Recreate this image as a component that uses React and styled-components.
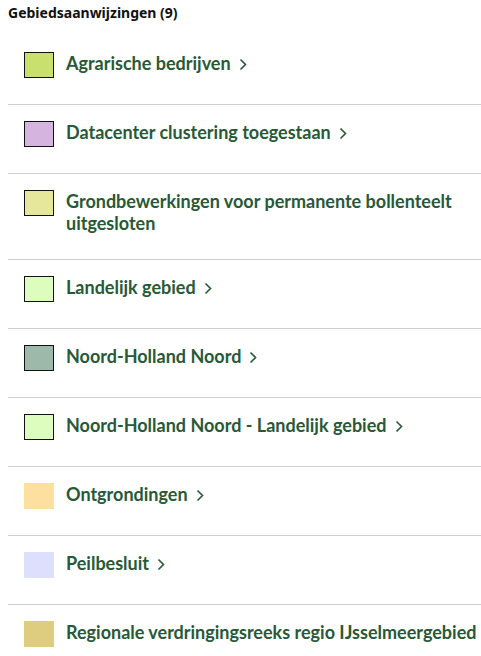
import React from "react";
import styled, { createGlobalStyle } from "styled-components";

const Global = createGlobalStyle`
  html, body { margin: 0; padding: 0; background: #fff; }
  body { font-family: Lato, "Noto Sans", sans-serif; }
`;

const Panel = styled.section`
  padding: 5px 0 0 8px;
  width: 473px;
`;

const Title = styled.h2`
  margin: 0;
  font-size: 14px;
  line-height: 16px;
  font-weight: 700;
  color: #111;
  font-family: "Noto Sans", sans-serif;
`;

const List = styled.ul`
  list-style: none;
  margin: 15px 0 0;
  padding: 0;
`;

const Row = styled.li`
  display: flex;
  align-items: flex-start;
  gap: 12px;
  padding: 16px 0 26px 16px;
  border-bottom: ${(p) => (p.$last ? "none" : "1px solid #cfcfcf")};
`;

const Swatch = styled.span`
  flex: none;
  width: 30px;
  height: 26px;
  box-sizing: border-box;
  background: ${(p) => p.$color};
  border: ${(p) => (p.$outlined ? "1px solid #111" : "none")};
`;

const Label = styled.a`
  font-size: 18px;
  line-height: 21.5px;
  font-weight: 700;
  color: #275937;
  text-decoration: none;
  padding-top: 1px;
  margin-bottom: -1px;
`;

const Chevron = styled.svg`
  display: inline-block;
  width: 8px;
  height: 13px;
  margin-left: 8px;
  vertical-align: -1px;
`;

const items = [
  { label: "Agrarische bedrijven", color: "#c9e06f", outlined: true, chevron: true },
  { label: "Datacenter clustering toegestaan", color: "#d6b4e0", outlined: true, chevron: true },
  { label: "Grondbewerkingen voor permanente bollenteelt uitgesloten", color: "#e6e79b", outlined: true, chevron: false },
  { label: "Landelijk gebied", color: "#dcfdbd", outlined: true, chevron: true },
  { label: "Noord-Holland Noord", color: "#9db9a9", outlined: true, chevron: true },
  { label: "Noord-Holland Noord - Landelijk gebied", color: "#dcfdbd", outlined: true, chevron: true },
  { label: "Ontgrondingen", color: "#fddf9f", outlined: false, chevron: true },
  { label: "Peilbesluit", color: "#dddffd", outlined: false, chevron: true },
  { label: "Regionale verdringingsreeks regio IJsselmeergebied", color: "#dfcd7f", outlined: false, chevron: false },
];

export default function App() {
  return (
    <>
      <Global />
      <Panel>
        <Title>Gebiedsaanwijzingen (9)</Title>
        <List>
          {items.map((it, i) => (
            <Row key={it.label} $last={i === items.length - 1}>
              <Swatch $color={it.color} $outlined={it.outlined} />
              <Label href="#">
                {it.label}
                {it.chevron && (
                  <Chevron viewBox="0 0 8 13" aria-hidden="true">
                    <path d="M1.5 1.5 L6.5 6.5 L1.5 11.5" fill="none" stroke="#275937" strokeWidth="1.6" />
                  </Chevron>
                )}
              </Label>
            </Row>
          ))}
        </List>
      </Panel>
    </>
  );
}
